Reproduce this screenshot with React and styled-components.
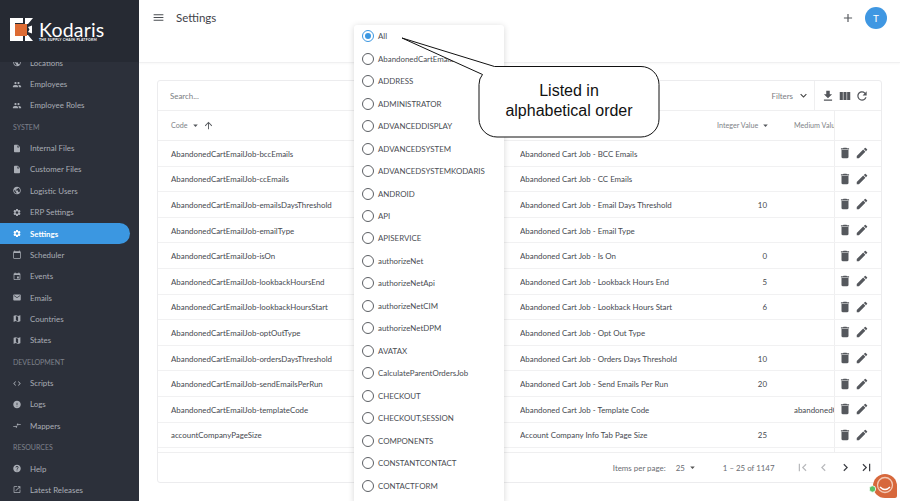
import React from "react";
import styled, { createGlobalStyle } from "styled-components";
import {
  MdPeople, MdInsertDriveFile, MdPublic, MdSettings, MdCalendarToday, MdEvent, MdEmail, MdMap,
  MdCode, MdError, MdCompareArrows, MdHelp, MdOpenInNew, MdDelete, MdEdit, MdFileDownload,
  MdViewColumn, MdRefresh, MdAdd, MdMenu, MdArrowDropDown, MdArrowUpward, MdExpandMore,
  MdFirstPage, MdChevronLeft, MdChevronRight, MdLastPage,
} from "react-icons/md";

const Global = createGlobalStyle`
  html, body { margin: 0; padding: 0; height: 100%; background: #fff; overflow: hidden; }
  #root { height: 100%; }
  * { box-sizing: border-box; }
`;

const Shell = styled.div`
  position: relative; display: flex; width: 900px; height: 501px; overflow: hidden;
  font-family: Lato, "Liberation Sans", sans-serif; font-size: 7.9px; color: #3f434a; background: #fff;
`;
const Sidebar = styled.aside`
  width: 139px; flex: none; background: #2c303a; display: flex; flex-direction: column; overflow: hidden;
`;
const Brand = styled.div`
  position: relative; z-index: 1; height: 62px; flex: none; background: #262a33;
  display: flex; align-items: flex-start; padding: 18px 0 0 10px; gap: 6px;
`;
const BrandText = styled.div`display: flex; flex-direction: column; color: #fff; margin-top: 4px;`;
const BrandName = styled.span`font-size: 19.5px; line-height: 16px; letter-spacing: .2px;`;
const BrandTag = styled.span`font-size: 3.4px; line-height: 5px; letter-spacing: .32px; font-weight: 700;`;
const Nav = styled.nav`margin-top: -10px; display: flex; flex-direction: column; padding-right: 9px;`;
const NavItem = styled.div`
  height: 21.37px; flex: none; display: flex; align-items: center; gap: 8px; padding-left: 12px;
  color: ${(p) => (p.$active ? "#fff" : "#a9adb5")}; font-weight: ${(p) => (p.$active ? 700 : 400)};
  background: ${(p) => (p.$active ? "#3b97e1" : "transparent")}; border-radius: 0 11px 11px 0;
  svg { font-size: 9px; flex: none; width: 10px; }
`;
const NavHead = styled.div`
  height: 21.37px; flex: none; display: flex; align-items: center; padding-left: 13px;
  color: #7e828b; font-size: 7px;
`;

const Main = styled.main`flex: 1; min-width: 0; display: flex; flex-direction: column;`;
const TopBar = styled.header`
  height: 63px; flex: none; display: flex; align-items: flex-start; padding: 7px 13px 0 13px; gap: 11px;
  border-bottom: 1px solid #f0f0f1; box-shadow: 0 1px 2px rgba(0,0,0,.03);
`;
const MenuBtn = styled.span`display: flex; font-size: 13px; color: #4a4d52; margin-top: 4px;`;
const Title = styled.h1`margin: 1px 0 0; font-size: 11.5px; line-height: 20px; font-weight: 400; color: #3f434a; flex: 1;`;
const AddBtn = styled.span`display: flex; font-size: 14px; color: #55585d; margin: 4px 0 0;`;
const Avatar = styled.div`
  width: 22px; height: 22px; border-radius: 50%; background: #3f97e2; color: #fff; font-size: 10px;
  display: flex; align-items: center; justify-content: center; margin-left: -1px;
`;
const Content = styled.div`flex: 1; min-height: 0; padding: 17px 18px 18px 18px;`;
const Card = styled.section`
  height: 403px; border: 1px solid #ececee; border-radius: 3px; display: flex; flex-direction: column; overflow: hidden;
`;
const Toolbar = styled.div`height: 30px; flex: none; display: flex; align-items: center; border-bottom: 1px solid #efeff0;`;
const Search = styled.span`flex: 1; padding-left: 12px; color: #7a7d82;`;
const Filters = styled.div`
  height: 100%; flex: none; display: flex; align-items: center; justify-content: flex-end; gap: 4px; color: #7a7d82;
  padding-right: 4px;
  svg { font-size: 13px; color: #444; }
`;
const ToolIcons = styled.div`
  width: 67px; height: 100%; flex: none; border-left: 1px solid #efeff0; display: flex; align-items: center;
  padding-left: 6px; gap: 3px; svg { font-size: 14px; color: #53565b; }
`;
const Grid = styled.div`
  display: grid; grid-template-columns: 362px 197px 77px 40px 47px; flex: none;
`;
const HeadRow = styled(Grid)`height: 30px; border-bottom: 1px solid #efeff0; color: #808388; font-size: 7.2px;`;
const Row = styled(Grid)`height: 25.6px; border-bottom: 1px solid #f1f1f2; color: #46494f;`;
const Rows = styled.div`flex: 1; min-height: 0; overflow: hidden; border-bottom: 1px solid #efeff0;`;
const Cell = styled.div`
  display: flex; align-items: center; overflow: hidden; white-space: nowrap; padding-left: ${(p) => p.$pad ?? 0}px; padding-top: 1px;
`;
const NumberCell = styled(Cell)`justify-content: flex-end; padding-right: 27px;`;
const HeadCell = styled(Cell)`svg { font-size: 11px; color: #55585d; } gap: 2px; padding-top: 0;`;
const Actions = styled.div`
  border-left: 1px solid #efeff0; display: flex; align-items: center; padding-left: 3px; gap: 3px;
  svg { font-size: 14px; color: #55585d; }
`;
const Pager = styled.footer`
  height: 29px; flex: none; display: flex; align-items: center; justify-content: flex-end; padding-right: 7px; color: #6a6d72;
`;
const PageSize = styled.span`display: flex; align-items: center; margin-left: 10px; gap: 2px; svg { font-size: 11px; color: #555; }`;
const Range = styled.span`margin-left: 25px;`;
const PagerBtns = styled.div`
  display: flex; margin-left: 20px; gap: 6.5px; svg { font-size: 15px; }
`;
const PagerBtn = styled.span`display: flex; color: ${(p) => (p.$off ? "#b9babd" : "#3e4046")};`;

const Popup = styled.div`
  position: absolute; left: 354px; top: 25px; width: 150px; height: 480px; background: #fff; border-radius: 3px;
  box-shadow: 0 1px 6px rgba(0,0,0,.16); padding: 0 0 0 8px; z-index: 2; display: flex; flex-direction: column;
`;
const Option = styled.div`
  height: 22.47px; flex: none; display: flex; align-items: center; gap: 4px; white-space: nowrap; color: #4a4d53; overflow: hidden;
`;
const Radio = styled.span`
  width: 12px; height: 12px; flex: none; border-radius: 50%; border: 1.3px solid ${(p) => (p.$on ? "#3b97e1" : "#5c5f64")};
  display: flex; align-items: center; justify-content: center;
  &::after { content: ""; width: 6px; height: 6px; border-radius: 50%; background: ${(p) => (p.$on ? "#3b97e1" : "transparent")}; }
`;
const CalloutArt = styled.svg`position: absolute; left: 395px; top: 30px; z-index: 3;`;
const CalloutText = styled.div`
  position: absolute; left: 479px; top: 81px; width: 180px; z-index: 4; text-align: center;
  font-family: "Liberation Sans", Arial, sans-serif; font-size: 16px; line-height: 19.5px; color: #111;
`;
const Chat = styled.svg`position: absolute; left: 866px; top: 471px; z-index: 5;`;

const Logo = () => (
  <svg width="23" height="23" viewBox="0 0 23 23">
    <path d="M0 0H13V5H5V18H13V23H0Z" fill="#fff" />
    <path d="M15 0H23L18 6H15ZM15 23H23L18 17H15Z" fill="#fff" />
    <path d="M18 9L22 7.500V15.500L18 14L19.500 11.500Z" fill="#fff" />
    <rect x="5" y="6" width="12" height="12" fill="#dd6b33" />
  </svg>
);

const nav = [
  ["i", MdPublic, "Locations"], ["i", MdPeople, "Employees"], ["i", MdPeople, "Employee Roles"], ["h", null, "SYSTEM"],
  ["i", MdInsertDriveFile, "Internal Files"], ["i", MdInsertDriveFile, "Customer Files"], ["i", MdPublic, "Logistic Users"],
  ["i", MdSettings, "ERP Settings"], ["a", MdSettings, "Settings"], ["i", MdCalendarToday, "Scheduler"], ["i", MdEvent, "Events"],
  ["i", MdEmail, "Emails"], ["i", MdMap, "Countries"], ["i", MdMap, "States"], ["h", null, "DEVELOPMENT"],
  ["i", MdCode, "Scripts"], ["i", MdError, "Logs"], ["i", MdCompareArrows, "Mappers"], ["h", null, "RESOURCES"],
  ["i", MdHelp, "Help"], ["i", MdOpenInNew, "Latest Releases"],
];
const rows = [
  ["AbandonedCartEmailJob-bccEmails", "Abandoned Cart Job - BCC Emails"],
  ["AbandonedCartEmailJob-ccEmails", "Abandoned Cart Job - CC Emails"],
  ["AbandonedCartEmailJob-emailsDaysThreshold", "Abandoned Cart Job - Email Days Threshold", "10"],
  ["AbandonedCartEmailJob-emailType", "Abandoned Cart Job - Email Type"],
  ["AbandonedCartEmailJob-isOn", "Abandoned Cart Job - Is On", "0"],
  ["AbandonedCartEmailJob-lookbackHoursEnd", "Abandoned Cart Job - Lookback Hours End", "5"],
  ["AbandonedCartEmailJob-lookbackHoursStart", "Abandoned Cart Job - Lookback Hours Start", "6"],
  ["AbandonedCartEmailJob-optOutType", "Abandoned Cart Job - Opt Out Type"],
  ["AbandonedCartEmailJob-ordersDaysThreshold", "Abandoned Cart Job - Orders Days Threshold", "10"],
  ["AbandonedCartEmailJob-sendEmailsPerRun", "Abandoned Cart Job - Send Emails Per Run", "20"],
  ["AbandonedCartEmailJob-templateCode", "Abandoned Cart Job - Template Code", "", "abandonedCart"],
  ["accountCompanyPageSize", "Account Company Info Tab Page Size", "25"],
  ["", ""],
];
const options = ["All", "AbandonedCartEmailJob", "ADDRESS", "ADMINISTRATOR", "ADVANCEDDISPLAY", "ADVANCEDSYSTEM", "ADVANCEDSYSTEMKODARIS", "ANDROID", "API", "APISERVICE", "authorizeNet", "authorizeNetApi", "authorizeNetCIM", "authorizeNetDPM", "AVATAX", "CalculateParentOrdersJob", "CHECKOUT", "CHECKOUT,SESSION", "COMPONENTS", "CONSTANTCONTACT", "CONTACTFORM"];

export default function App() {
  return (
    <Shell>
      <Global />
      <Sidebar>
        <Brand>
          <Logo />
          <BrandText>
            <BrandName>Kodaris</BrandName>
            <BrandTag>THE SUPPLY CHAIN PLATFORM</BrandTag>
          </BrandText>
        </Brand>
        <Nav>
          {nav.map(([k, I, t]) =>
            k === "h" ? <NavHead key={t}>{t}</NavHead> : <NavItem key={t} $active={k === "a"}><I />{t}</NavItem>
          )}
        </Nav>
      </Sidebar>
      <Main>
        <TopBar>
          <MenuBtn><MdMenu /></MenuBtn>
          <Title>Settings</Title>
          <AddBtn><MdAdd /></AddBtn>
          <Avatar>T</Avatar>
        </TopBar>
        <Content>
          <Card>
            <Toolbar>
              <Search>Search...</Search>
              <Filters>Filters <MdExpandMore /></Filters>
              <ToolIcons><MdFileDownload /><MdViewColumn /><MdRefresh /></ToolIcons>
            </Toolbar>
            <HeadRow>
              <HeadCell $pad={13}>Code <MdArrowDropDown /><MdArrowUpward /></HeadCell>
              <HeadCell />
              <HeadCell>Integer Value <MdArrowDropDown /></HeadCell>
              <HeadCell>Medium Value</HeadCell>
              <Actions />
            </HeadRow>
            <Rows>
              {rows.map((r, i) => (
                <Row key={i}>
                  <Cell $pad={13}>{r[0]}</Cell>
                  <Cell>{r[1]}</Cell>
                  <NumberCell>{r[2]}</NumberCell>
                  <Cell>{r[3]}</Cell>
                  <Actions><MdDelete /><MdEdit /></Actions>
                </Row>
              ))}
            </Rows>
            <Pager>
              Items per page:
              <PageSize>25 <MdArrowDropDown /></PageSize>
              <Range>1 – 25 of 1147</Range>
              <PagerBtns>
                <PagerBtn $off><MdFirstPage /></PagerBtn>
                <PagerBtn $off><MdChevronLeft /></PagerBtn>
                <PagerBtn><MdChevronRight /></PagerBtn>
                <PagerBtn><MdLastPage /></PagerBtn>
              </PagerBtns>
            </Pager>
          </Card>
        </Content>
      </Main>
      <Popup>
        {options.map((o, i) => (
          <Option key={o}><Radio $on={i === 0} />{o}</Option>
        ))}
      </Popup>
      <CalloutArt width="270" height="112" viewBox="395 30 270 112">
        <path d="M497 66.500H641a18 18 0 0 1 18 18V119a18 18 0 0 1-18 18H497a18 18 0 0 1-18-18V84.500q0-6 3.500-10L402 38l92.500 28.500z" fill="#fff" stroke="#111" strokeWidth="1" />
      </CalloutArt>
      <CalloutText>Listed in<br />alphabetical order</CalloutText>
      <Chat width="34" height="30" viewBox="866 471 34 30">
        <path d="M885 474a12 12 0 0 1 12 12v10a2 2 0 0 1-2 2H885a12 12 0 0 1 0-24z" fill="#d7683c" />
        <circle cx="885" cy="485" r="7.500" fill="none" stroke="#f3c9b5" strokeWidth="1.300" />
        <path d="M880 487q5 5 10 0" fill="none" stroke="#fff" strokeWidth="1.500" />
        <circle cx="872.500" cy="489" r="3.200" fill="#5ac267" stroke="#fff" strokeWidth=".8" />
      </Chat>
    </Shell>
  );
}
